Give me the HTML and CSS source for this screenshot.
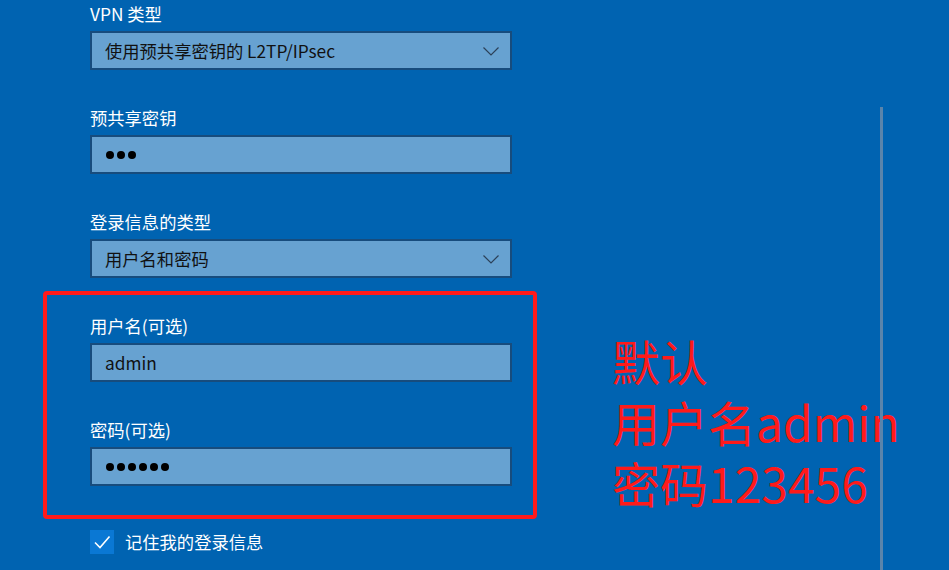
FILE: index.html
```html
<!DOCTYPE html>
<html>
<head>
    <title>VPN</title>
    <link rel="stylesheet" href="styles.css">
</head>
<body>
    <div class="page">
        <div class="form">
            <div class="field">
                <label>VPN 类型</label>
                <div class="box select">
                    <span>使用预共享密钥的 L2TP/IPsec</span>
                    <svg class="chev" width="16" height="9" viewBox="0 0 16 9"><path d="M0.5 0.5 L8 8 L15.5 0.5" fill="none" stroke="#2c4158" stroke-width="1.2"/></svg>
                </div>
            </div>
            <div class="field">
                <label>预共享密钥</label>
                <div class="box"><span class="dot"></span><span class="dot"></span><span class="dot"></span></div>
            </div>
            <div class="field">
                <label>登录信息的类型</label>
                <div class="box select">
                    <span>用户名和密码</span>
                    <svg class="chev" width="16" height="9" viewBox="0 0 16 9"><path d="M0.5 0.5 L8 8 L15.5 0.5" fill="none" stroke="#2c4158" stroke-width="1.2"/></svg>
                </div>
            </div>
            <div class="mark">
                <div class="field">
                    <label>用户名(可选)</label>
                    <div class="box"><span>admin</span></div>
                </div>
                <div class="field">
                    <label>密码(可选)</label>
                    <div class="box"><span class="dot"></span><span class="dot"></span><span class="dot"></span><span class="dot"></span><span class="dot"></span><span class="dot"></span></div>
                </div>
            </div>
            <div class="check">
                <span class="tick"><svg width="24" height="24" viewBox="0 0 24 24"><path d="M5 12.5 L10 17.5 L19.5 6.5" fill="none" stroke="#fff" stroke-width="1.6"/></svg></span>
                <span>记住我的登录信息</span>
            </div>
        </div>
        <div class="note">
            <p>默认</p>
            <p>用户名admin</p>
            <p>密码123456</p>
        </div>
    </div>
    <div class="scroll"></div>
</body>
</html>
```

FILE: styles.css
```css
body {
    margin: 0;
    background-color: #0063b1;
    font-family: "Noto Sans CJK SC", "Noto Sans", sans-serif;
    height: 570px;
    overflow: hidden;
}
.page {
    display: flex;
    padding-left: 90px;
    padding-top: 4px;
}
.form {
    width: 422px;
    display: flex;
    flex-direction: column;
}
.field {
    display: flex;
    flex-direction: column;
    margin-bottom: 38px;
}
.field label {
    color: #fff;
    font-size: 17.3px;
    line-height: 20px;
    margin-bottom: 7px;
}
.box {
    height: 35px;
    border: 2px solid #174c7d;
    background-color: #67a2d1;
    display: flex;
    align-items: center;
    padding: 0 11px 0 13px;
    color: #111;
    font-size: 17.3px;
}
.select {
    justify-content: space-between;
}
.chev {
    margin-top: 1px;
}
.dot {
    width: 8px;
    height: 8px;
    border-radius: 50%;
    background-color: #000;
    margin-left: 1px;
    margin-right: 2px;
}
.mark {
    margin-left: -47px;
    margin-right: -25px;
    margin-top: -25px;
    padding: 21px 21px 29px 43px;
    border: 4px solid #ff1a1a;
    border-radius: 4px;
}
.mark .field:last-child {
    margin-bottom: 0;
}
.check {
    display: flex;
    align-items: center;
    margin-top: 10px;
    color: #fff;
    font-size: 17.3px;
}
.tick {
    width: 24px;
    height: 24px;
    background-color: #0a78d4;
    margin-right: 11px;
    display: flex;
}
.note {
    margin-left: 100px;
    margin-top: 326px;
    color: #ff1a1a;
    font-size: 48px;
    white-space: nowrap;
}
.note p {
    margin: 0;
    line-height: 61px;
}
.scroll {
    position: absolute;
    left: 880px;
    top: 107px;
    width: 3px;
    height: 470px;
    background-color: #5a84ab;
}
```
